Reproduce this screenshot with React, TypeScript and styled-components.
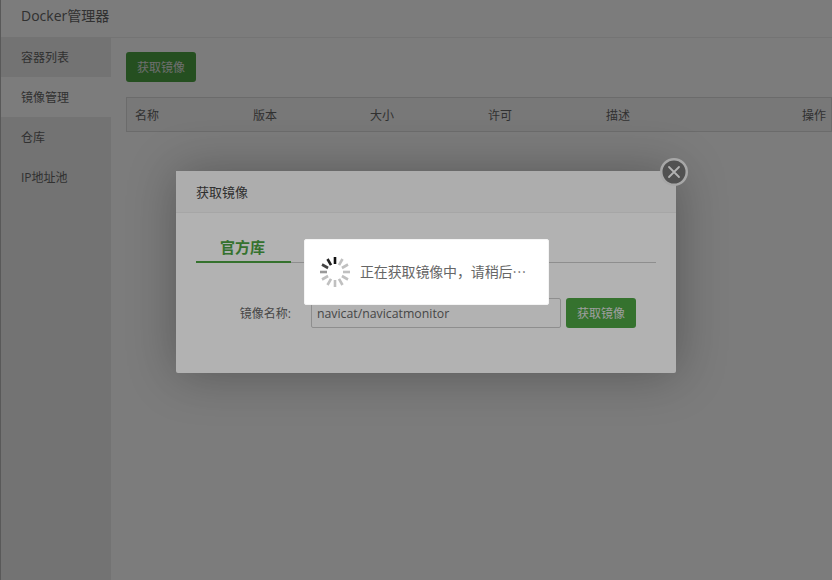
import React from "react";
import styled, { createGlobalStyle } from "styled-components";

const Global = createGlobalStyle`
  html, body { margin: 0; padding: 0; height: 100%; background: #fff; overflow: hidden; }
  body { font-family: "Open Sans", "Noto Sans CJK SC", sans-serif; font-size: 12px; color: #666; }
  #root { height: 100%; }
  * { box-sizing: border-box; }
`;

const Page = styled.div`
  width: 832px;
  height: 580px;
  display: flex;
  flex-direction: column;
  border-left: 1px solid #b8b8b8;
`;
const Header = styled.header`
  height: 38px;
  flex: none;
  display: flex;
  align-items: center;
  padding: 0 0 8px 20px;
  background: #fff;
  border-bottom: 1px solid #eee;
  font-size: 14px;
  color: #666;
`;
const Body = styled.div`
  flex: 1;
  display: flex;
  min-height: 0;
`;
const Sidebar = styled.nav`
  width: 110px;
  flex: none;
  background: #ececec;
  margin-top: -1px;
`;
const NavItem = styled.div<{ $active?: boolean }>`
  height: 40px;
  display: flex;
  align-items: center;
  padding-left: 20px;
  font-size: 12px;
  color: #666;
  background: ${(p) => (p.$active ? "#fff" : "transparent")};
`;
const Content = styled.main`
  flex: 1;
  min-width: 0;
  padding: 14px 0 0 15px;
`;
const GreenButton = styled.button`
  width: 70px;
  height: 30px;
  padding: 0 0 2px;
  border: 0;
  border-radius: 3px;
  background: #4ca443;
  color: #e2e2e2;
  font: 12px "Noto Sans CJK SC", sans-serif;
`;
const Table = styled.div`
  margin-top: 15px;
  height: 35px;
  border: 1px solid #ddd;
  background: #f6f6f6;
  display: grid;
  grid-template-columns: 118px 117px 118px 118px 196px 1fr;
  align-items: center;
  padding-left: 8px;
  font-size: 12px;
  color: #666;
`;
const Th = styled.div<{ $right?: boolean }>`
  text-align: ${(p) => (p.$right ? "right" : "left")};
  padding-right: ${(p) => (p.$right ? "5px" : "0")};
`;
const Shade = styled.div`
  position: absolute;
  inset: 0;
  background: rgba(0, 0, 0, 0.3);
`;
const Dialog = styled.section`
  position: absolute;
  left: 176px;
  top: 171px;
  width: 500px;
  height: 202px;
  background: #fff;
  border-radius: 2px;
  box-shadow: 1px 1px 50px rgba(0, 0, 0, 0.3);
`;
const DialogTitle = styled.div`
  height: 42px;
  padding: 0 0 1px 20px;
  display: flex;
  align-items: center;
  background: #f8f8f8;
  border-bottom: 1px solid #eee;
  font-size: 13px;
  color: #444;
`;
const DialogBody = styled.div`
  padding: 24px 20px 0;
`;
const Tabs = styled.div`
  height: 26px;
  border-bottom: 1px solid #ccc;
  display: flex;
`;
const Tab = styled.div`
  width: 95px;
  height: 26px;
  padding-right: 2px;
  text-align: center;
  font-size: 15px;
  font-weight: 700;
  line-height: 21px;
  color: #4ca443;
  border-bottom: 2px solid #4ca443;
`;
const FormRow = styled.div`
  display: flex;
  align-items: center;
  margin-top: 35px;
`;
const Label = styled.label`
  width: 95px;
  text-align: right;
  font-size: 12px;
  color: #666;
`;
const Input = styled.input`
  width: 250px;
  height: 30px;
  margin: 0 5px 0 20px;
  padding: 0 5px;
  border: 1px solid #ccc;
  border-radius: 2px;
  background: #fff;
  color: #666;
  font: 12.3px "Open Sans", sans-serif;
  outline: none;
`;
const Close = styled.div`
  position: absolute;
  right: -13px;
  top: -14px;
  width: 30px;
  height: 30px;
`;
const Loading = styled.div`
  position: absolute;
  left: 304px;
  top: 239px;
  width: 245px;
  height: 66px;
  background: #fff;
  border: 1px solid #f4f4f4;
  border-radius: 2px;
  display: flex;
  align-items: center;
  gap: 9px;
  padding: 0 0 1px 14px;
  white-space: nowrap;
`;
const LoadingText = styled.span`
  font: 14px "Noto Sans CJK SC", sans-serif;
  letter-spacing: -0.15px;
  color: #666;
  margin-bottom: 2px;
`;

const spokeColors = ["#111", "#c0c0c0", "#c0c0c0", "#c0c0c0", "#c0c0c0", "#c0c0c0", "#c0c0c0", "#c0c0c0", "#c0c0c0", "#999", "#444", "#222"];

const Spinner = () => (
  <svg width="32" height="32" viewBox="0 0 32 32" aria-hidden="true">
    {spokeColors.map((c, i) => (
      <line key={i} x1="16" y1="1" x2="16" y2="8" stroke={c} strokeWidth="2.6" transform={`rotate(${i * 30} 16 16)`} />
    ))}
  </svg>
);

const CloseIcon = () => (
  <svg width="30" height="30" viewBox="0 0 30 30" aria-hidden="true">
    <circle cx="15" cy="15" r="12.75" fill="#747474" stroke="#f0f0f0" strokeWidth="2.5" />
    <path d="M10 10 L20 20 M20 10 L10 20" stroke="#fff" strokeWidth="1.8" strokeLinecap="round" />
  </svg>
);

export default function App() {
  return (
    <>
      <Global />
      <Page>
        <Header>Docker管理器</Header>
        <Body>
          <Sidebar>
            <NavItem>容器列表</NavItem>
            <NavItem $active>镜像管理</NavItem>
            <NavItem>仓库</NavItem>
            <NavItem>IP地址池</NavItem>
          </Sidebar>
          <Content>
            <GreenButton>获取镜像</GreenButton>
            <Table>
              <Th>名称</Th>
              <Th>版本</Th>
              <Th>大小</Th>
              <Th>许可</Th>
              <Th>描述</Th>
              <Th $right>操作</Th>
            </Table>
          </Content>
        </Body>
      </Page>
      <Shade />
      <Dialog>
        <DialogTitle>获取镜像</DialogTitle>
        <DialogBody>
          <Tabs>
            <Tab>官方库</Tab>
          </Tabs>
          <FormRow>
            <Label>镜像名称:</Label>
            <Input readOnly value="navicat/navicatmonitor" />
            <GreenButton>获取镜像</GreenButton>
          </FormRow>
        </DialogBody>
        <Close>
          <CloseIcon />
        </Close>
      </Dialog>
      <Shade />
      <Loading>
        <Spinner />
        <LoadingText lang="zh-CN">正在获取镜像中，请稍后⋯</LoadingText>
      </Loading>
    </>
  );
}
